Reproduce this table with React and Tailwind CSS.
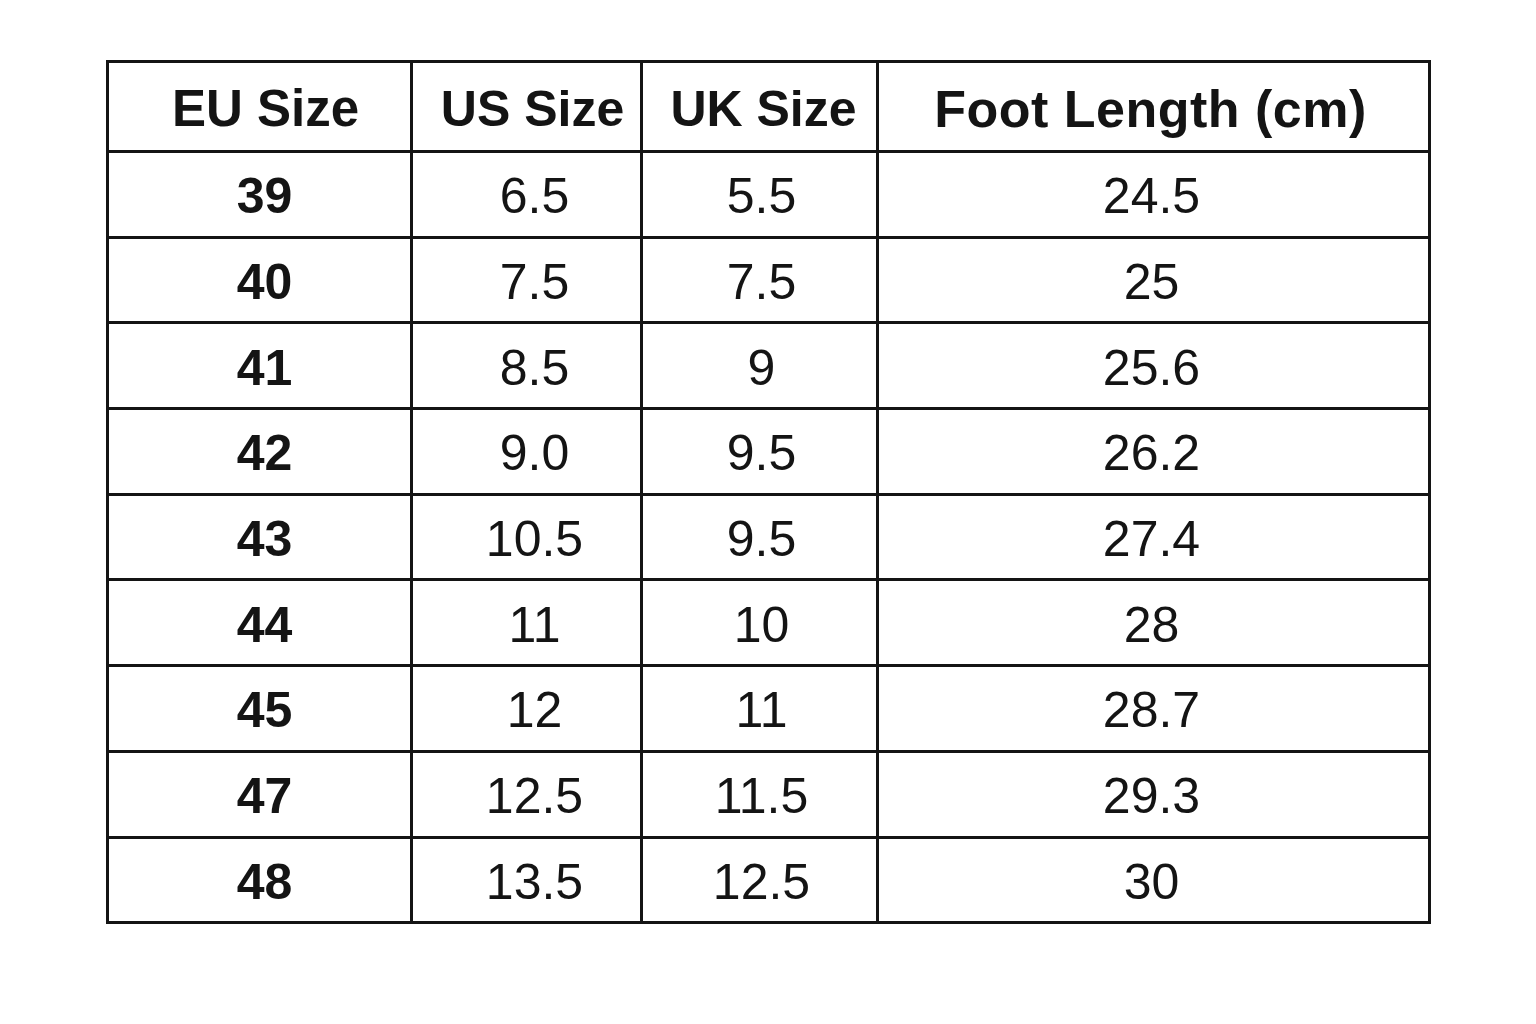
import React from 'react'

const rows = [
  ['39', '6.5', '5.5', '24.5'],
  ['40', '7.5', '7.5', '25'],
  ['41', '8.5', '9', '25.6'],
  ['42', '9.0', '9.5', '26.2'],
  ['43', '10.5', '9.5', '27.4'],
  ['44', '11', '10', '28'],
  ['45', '12', '11', '28.7'],
  ['47', '12.5', '11.5', '29.3'],
  ['48', '13.5', '12.5', '30'],
]

const headers = ['EU Size', 'US Size', 'UK Size', 'Foot Length (cm)']

// small nudges so the text sits where it does in the picture
const headPad = ['pl-[12px] text-[51px]', 'pl-3 text-[50px]', 'pl-2 text-[50px]', 'pr-[6px] text-[52px] tracking-[0.5px]']
const cellPad = ['pl-[10px]', 'pl-4', 'pl-1', 'pr-1']

const App = () => {
  return (
    <div
      className="w-[1536px] h-[1024px] bg-white text-[#141414] pt-[60px] pl-[106px]"
      style={{ fontFamily: '"Liberation Sans", Arial, sans-serif' }}
    >
      <div className="grid grid-cols-[304px_230px_236px_552px] w-fit border-l-[3px] border-t-[3px] border-[#141414]">
        {headers.map((h, i) => (
          <div
            key={h}
            className={`h-[90px] pt-[5px] flex items-center justify-center border-r-[3px] border-b-[3px] border-[#141414] font-bold ${headPad[i]}`}
          >
            {h}
          </div>
        ))}
        {rows.map((r) =>
          r.map((v, i) => (
            <div
              key={r[0] + '-' + i}
              className={`h-[85.7px] pt-[5px] flex items-center justify-center border-r-[3px] border-b-[3px] border-[#141414] text-[50px] ${i === 0 ? 'font-bold' : 'font-normal'} ${cellPad[i]}`}
            >
              {v}
            </div>
          ))
        )}
      </div>
    </div>
  )
}

export default App
